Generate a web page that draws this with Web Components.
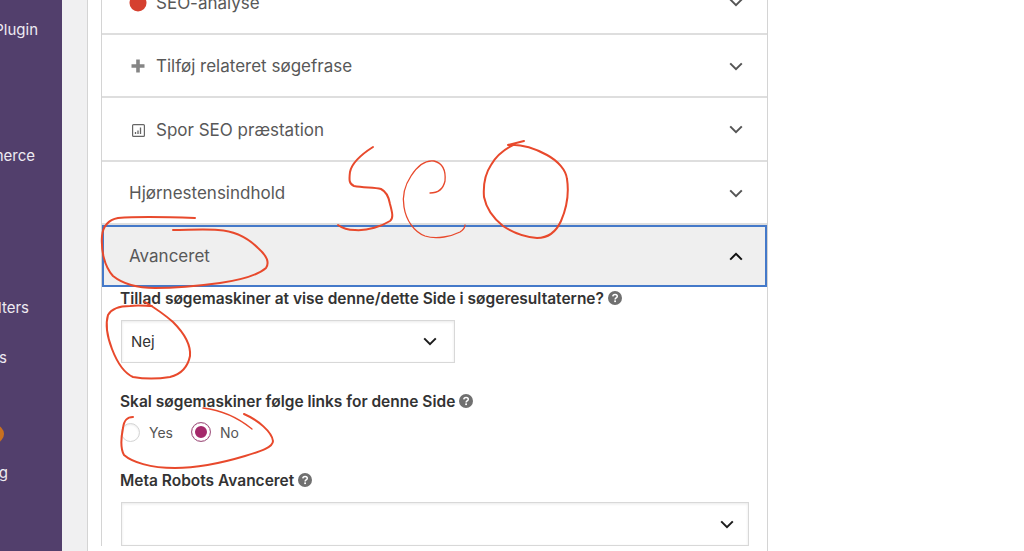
<!DOCTYPE html>
<html lang="da">
<head>
<meta charset="utf-8">
<title>SEO</title>
<style>
  html, body { margin: 0; height: 551px; overflow: hidden; background: #fff; }
  body { font-family: Inter, "Liberation Sans", sans-serif; position: relative; display: flex; }
</style>
</head>
<body>
<wp-sidebar>
  <wp-menu-item top="21">Plugin</wp-menu-item>
  <wp-menu-item top="109">merce</wp-menu-item>
  <wp-menu-item top="135">lters</wp-menu-item>
  <wp-menu-item top="33">s</wp-menu-item>
  <wp-menu-item top="98">g</wp-menu-item>
</wp-sidebar>
<wp-gutter></wp-gutter>
<wp-page>
  <seo-box>
    <seo-row label="SEO-analyse"><svg slot="icon" width="18" height="18" viewBox="0 0 18 18"><circle cx="9" cy="9" r="8.5" fill="#d5402f"/></svg></seo-row>
    <seo-row label="Tilføj relateret søgefrase"><svg slot="icon" width="18" height="18" viewBox="0 0 18 18"><path d="M9 2.5v13M2.5 9h13" stroke="#858585" stroke-width="3.6" fill="none"/></svg></seo-row>
    <seo-row label="Spor SEO præstation"><svg slot="icon" width="18" height="18" viewBox="0 0 18 18" fill="none"><rect x="3.6" y="3.6" width="11.8" height="11.8" rx="1" stroke="#666" stroke-width="1.2"/><path d="M6.5 13v-2M9 13V9.5M11.5 13V6.5" stroke="#666" stroke-width="1.3"/></svg></seo-row>
    <seo-row label="Hjørnestensindhold" plain></seo-row>
    <seo-row label="Avanceret" plain open></seo-row>
    <seo-field label="Tillad søgemaskiner at vise denne/dette Side i søgeresultaterne?" gap="2.25" space="13">
      <seo-select width="334" height="43" pad="17" value="Nej"></seo-select>
    </seo-field>
    <seo-field label="Skal søgemaskiner følge links for denne Side" gap="30.5" space="12">
      <seo-radios></seo-radios>
    </seo-field>
    <seo-field label="Meta Robots Avanceret" gap="30.25" space="13">
      <seo-select width="628" height="44" pad="14"></seo-select>
    </seo-field>
  </seo-box>
</wp-page>
<ink-notes></ink-notes>

<script>
const define = (name, css, html, setup) => {
  customElements.define(name, class extends HTMLElement {
    connectedCallback() {
      if (this.shadowRoot) return;
      const root = this.attachShadow({ mode: "open" });
      root.innerHTML = `<style>${css}</style>${typeof html === "function" ? html(this) : html}`;
      if (setup) setup(this, root);
    }
  });
};

const chevron = (up, color) => `<svg width="14" height="9" viewBox="0 0 14 9" fill="none"><path d="${up ? "M1.2 7.6 7 1.8l5.8 5.8" : "M1.2 1.4 7 7.2l5.8-5.8"}" stroke="${color}" stroke-width="2"/></svg>`;

define("wp-sidebar", `
  :host { display: flex; flex-direction: column; flex: none; width: 62px; height: 551px; background: #523f6c; position: relative; overflow: hidden; }
  .badge { position: absolute; left: -14px; top: 425px; width: 18px; height: 18px; border-radius: 50%; background: #c8701f; }
`, `<slot></slot><span class="badge"></span>`);

define("wp-menu-item", `
  :host { display: flex; justify-content: flex-end; white-space: nowrap; color: #eeebf2; font-size: 15px; line-height: 17px; }
`, `<slot></slot>`, (el) => {
  const ends = { Plugin: 38, merce: 35, lters: 29, s: 7, g: 8 };
  el.style.width = ends[el.textContent] + "px";
  el.style.marginTop = el.getAttribute("top") + "px";
});

define("wp-gutter", `
  :host { display: block; flex: none; width: 25px; height: 551px; background: #f0f0f1; border-right: 1px solid #d4d4d4; }
`, ``);

define("wp-page", `
  :host { display: block; flex: none; width: 680px; padding-left: 13px; box-sizing: border-box; height: 551px; border-right: 1px solid #d4d4d4; }
`, `<slot></slot>`);

define("seo-box", `
  :host { display: block; margin-top: -28.75px; border-left: 1px solid #d4d4d4; color: #404040; }
`, `<slot></slot>`);

define("seo-row", `
  :host { display: flex; align-items: center; box-sizing: border-box; height: 63.5px; padding: 1px 24px 0 27px; border-bottom: 2px solid #dedede; font-size: 17px; color: #585858; }
  :host([open]) { height: 62px; padding-top: 0; background: #efefef; outline: 2px solid #4479c9; outline-offset: -2px; border-bottom: 0; }
  .icon { display: flex; width: 27px; }
  :host([plain]) .icon { display: none; }
  .label { flex: 1; }
  .chev { display: flex; }
`, (el) => `<span class="icon"><slot name="icon"></slot></span><span class="label">${el.getAttribute("label")}</span><span class="chev">${chevron(el.hasAttribute("open"), el.hasAttribute("open") ? "#111" : "#555")}</span>`);

define("seo-help", `
  :host { display: inline-flex; vertical-align: -1px; margin-left: 4px; }
`, `<svg width="14" height="14" viewBox="0 0 14 14"><circle cx="7" cy="7" r="7" fill="#707070"/><path d="M4.8 5.4C4.9 4.1 5.9 3.4 7.1 3.4c1.3 0 2.2.8 2.2 1.9 0 1.7-2.2 1.6-2.2 3.1" fill="none" stroke="#fff" stroke-width="1.5"/><rect x="6.2" y="9.4" width="1.8" height="1.7" fill="#fff"/></svg>`);

define("seo-field", `
  :host { display: block; padding-left: 18px; }
  .label { font-size: 15.5px; font-weight: 600; line-height: 17px; color: #333; white-space: nowrap; }
`, (el) => `<div class="label">${el.getAttribute("label")}<seo-help></seo-help></div><div class="body" style="margin-top:${el.getAttribute("space")}px"><slot></slot></div>`, (el) => {
  el.style.marginTop = el.getAttribute("gap") + "px";
});

define("seo-select", `
  :host { display: flex; align-items: center; justify-content: space-between; box-sizing: border-box; padding-left: 9px; border: 1px solid #d8d8d8; box-shadow: inset 0 1px 3px rgba(0,0,0,.09); font-size: 15px; color: #333; margin-left: 1px; background: #fff; }
`, (el) => `<span>${el.getAttribute("value") || ""}</span>${chevron(false, "#1c1c1c")}`, (el) => {
  el.style.width = el.getAttribute("width") + "px";
  el.style.height = el.getAttribute("height") + "px";
  el.style.paddingRight = el.getAttribute("pad") + "px";
});

define("seo-radios", `
  :host { display: flex; align-items: center; height: 20px; margin-left: 1px; font-size: 14px; color: #555; }
  .dot { box-sizing: border-box; width: 19px; height: 19px; border-radius: 50%; border: 1px solid #d4d4d4; box-shadow: inset 0 1px 2px rgba(0,0,0,.08); margin-right: 9px; }
  .dot.on { width: 20px; height: 20px; border-color: #a0557f; box-shadow: inset 0 0 0 3px #fff, inset 0 0 0 10px #a4286a; }
  .yes { margin-right: 18px; }
`, `<span class="dot"></span><span class="yes">Yes</span><span class="dot on"></span><span>No</span>`);

define("ink-notes", `
  :host { position: absolute; left: 0; top: 0; width: 1024px; height: 551px; pointer-events: none; }
  svg { display: block; }
  path { fill: none; stroke: #e8492c; stroke-width: 2; stroke-linecap: round; stroke-linejoin: round; }
  .thin { stroke-width: 1.3; }
`, `<svg width="1024" height="551" viewBox="0 0 1024 551">
  <path d="M373 147C362 154 352 162 350 172 349 180 349 184 354 186 364 188 374 187 381 189 387 192 389 198 390 204 392 212 394 218 390 221 382 226 368 231 355 230 348 230 342 228 338 225"/>
  <path class="thin" d="M430 193C438 193 443 190 445 181 446 170 442 163 434 161 426 160 418 165 411 176 405 185 402 196 404 207 406 220 414 232 425 236 437 240 452 236 460 232 463 230 465 228 465 225"/>
  <path d="M524 141 508 145C520 144 534 148 547 155 558 161 566 170 567 179 569 192 567 207 561 221 556 232 548 238 537 238 525 237 512 232 503 226 493 218 486 207 484 197 483 184 485 174 491 165 496 156 505 149 513 145"/>
  <path d="M195 218C170 217 140 216 118 218 108 220 103 226 102 236 101 250 104 266 113 276 123 284 136 288 155 288 175 288 198 286 220 283 240 280 258 275 266 268 270 262 266 255 258 248 248 238 234 231 218 230 204 229 188 230 173 230"/>
  <path d="M145 302C155 308 165 315 173 322 184 333 191 345 190 356 188 366 182 374 170 377 158 379 144 379 133 377 124 373 117 362 112 349 107 336 105 325 108 315 112 308 120 306 130 306 138 305 146 306 152 306"/>
  <path class="thin" d="M203 408C220 410 236 416 252 429"/>
  <path d="M133 417C127 417 124 420 123 428 121 438 120 448 124 455 132 462 150 468 175 468 200 468 225 462 245 456 262 451 273 447 273 441 272 432 258 420 244 414"/>
</svg>`);
</script>
</body>
</html>
